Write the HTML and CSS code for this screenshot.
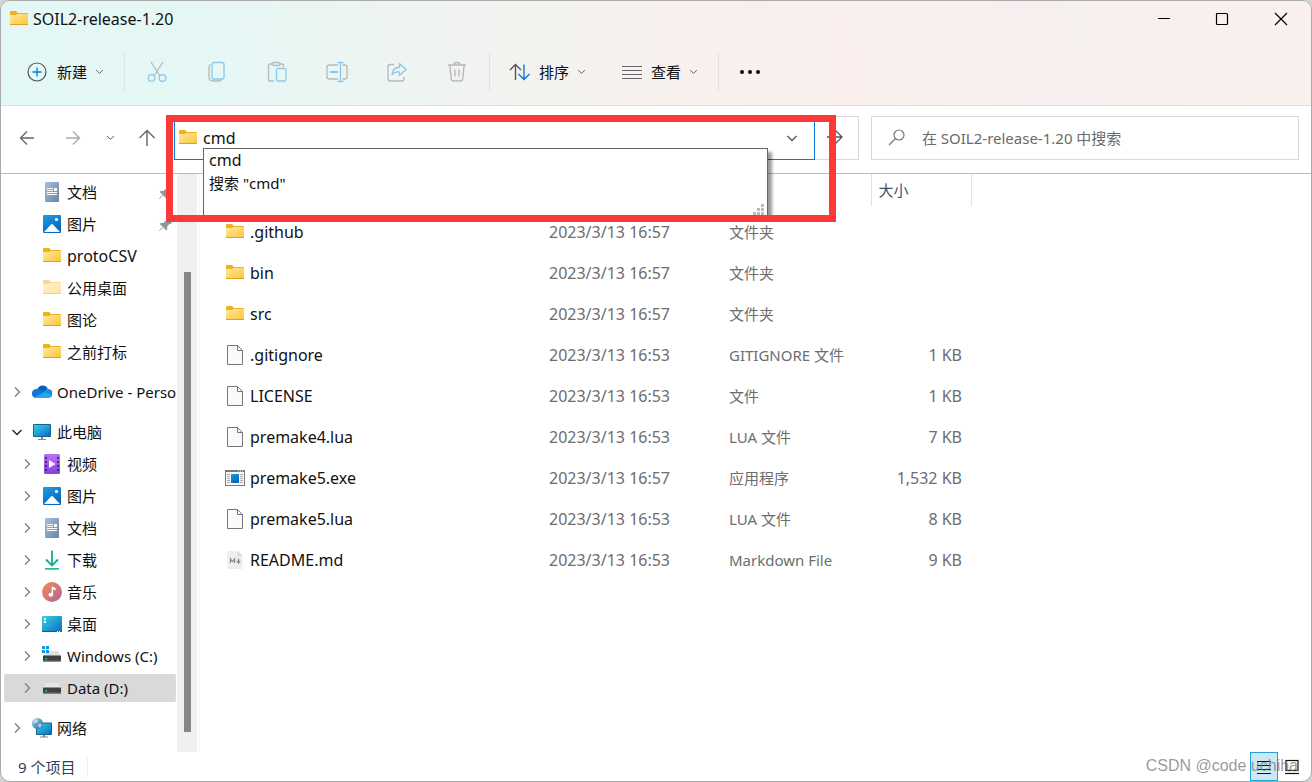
FILE: index.html
```html
<!DOCTYPE html>
<html lang="zh-CN">
<head>
<meta charset="utf-8">
<title>SOIL2-release-1.20</title>
<link rel="stylesheet" href="styles.css">
</head>
<body>
<svg class="sprite" aria-hidden="true">
  <defs>
    <linearGradient id="g-folder" x1="0" y1="0" x2="1" y2="1"><stop offset="0" stop-color="#ffe9a0"/><stop offset="1" stop-color="#fcc63a"/></linearGradient>
    <linearGradient id="g-doc" x1="0" y1="0" x2="1" y2="1"><stop offset="0" stop-color="#a9bfd6"/><stop offset="1" stop-color="#6585a5"/></linearGradient>
    <linearGradient id="g-pic" x1="0" y1="0" x2="0.5" y2="1"><stop offset="0" stop-color="#1c9ee8"/><stop offset="1" stop-color="#0a66bb"/></linearGradient>
    <linearGradient id="g-screen" x1="0" y1="0" x2="1" y2="1"><stop offset="0" stop-color="#35d3e4"/><stop offset="1" stop-color="#0b6cc4"/></linearGradient>
    <linearGradient id="g-video" x1="0" y1="0" x2="0" y2="1"><stop offset="0" stop-color="#b673f5"/><stop offset="1" stop-color="#8540dd"/></linearGradient>
    <linearGradient id="g-music" x1="0" y1="0" x2="1" y2="1"><stop offset="0" stop-color="#f09050"/><stop offset="1" stop-color="#b4609f"/></linearGradient>
    <linearGradient id="g-globe" x1="0" y1="0" x2="1" y2="1"><stop offset="0" stop-color="#8fc9e8"/><stop offset="1" stop-color="#2b6f9d"/></linearGradient>
  </defs>
  <symbol id="folder" viewBox="0 0 20 20">
    <path d="M1 3q0-1 1-1h5l2 2h9q1 0 1 1v3H1z" fill="#f4b01c"/>
    <path d="M1 6h6l2-1h10v10.500H1z" fill="url(#g-folder)"/>
    <path d="M1 15h18v1H1z" fill="#e2a024"/>
  </symbol>
  <symbol id="doc" viewBox="0 0 20 20">
    <rect x="3" width="14" height="20" rx="1" fill="url(#g-doc)"/>
    <path d="M5 6h6v1H5zM5 8h6v1H5zM5 10h10v1H5zM5 12h10v1H5zM12 6h3v3h-3z" fill="#fff"/>
  </symbol>
  <symbol id="pic" viewBox="0 0 20 20">
    <rect x="1" y="1" width="18" height="18" rx="1" fill="url(#g-pic)"/>
    <circle cx="14.500" cy="5.500" r="1.600" fill="#fff"/>
    <path d="M2 18l7-7.500q1-1 2 0l7 7.500z" fill="#f4faff"/>
  </symbol>
  <symbol id="cloud" viewBox="0 0 20 20">
    <path d="M5.500 7a5.600 5.600 0 0 1 10.300-.300L12 11 5 8z" fill="#0a62b8"/>
    <path d="M4 16A4.500 4.500 0 0 1 4.800 7q1.700-.1 3 .7l6 4z" fill="#0f78d4"/>
    <path d="M4.500 16L13 8.500q1.200-1.700 3.500-1.500a4.500 4.500 0 0 1-.5 9z" fill="#1490df"/>
    <path d="M2 15.300l11-5 6.500 3q-1.100 2.700-4 2.700H4.500q-1.500 0-2.500-.7z" fill="#28a8ea"/>
  </symbol>
  <symbol id="pc" viewBox="0 0 20 20">
    <path d="M6 17h8v1H6zM9 15h2v3H9z" fill="#7d878f"/>
    <rect x="1" y="2" width="18" height="13" rx="1" fill="#17618f"/>
    <rect x="2" y="3" width="16" height="11" fill="url(#g-screen)"/>
  </symbol>
  <symbol id="video" viewBox="0 0 20 20">
    <rect x="2" width="16" height="20" rx="1.500" fill="url(#g-video)"/>
    <path d="M4 3v15M16 3v15" stroke="#43206f" stroke-width="1.800" stroke-dasharray="2 2"/>
    <path d="M7 6l6.500 4L7 14z" fill="#fff"/>
  </symbol>
  <symbol id="down" viewBox="0 0 20 20">
    <path d="M10 .500v15M4 9.500l6 6 6-6" fill="none" stroke="#18aa91" stroke-width="1.800"/>
    <path d="M3 18h14v1.800H3z" fill="#2abf8d"/>
  </symbol>
  <symbol id="music" viewBox="0 0 20 20">
    <circle cx="10" cy="10" r="10" fill="url(#g-music)"/>
    <ellipse cx="8.800" cy="12.800" rx="2.300" ry="2" fill="#fff"/>
    <path d="M9.600 4.500q2 .2 4 1.500v2.200l-2.500-.7v5.300H9.600z" fill="#fff"/>
  </symbol>
  <symbol id="desktop" viewBox="0 0 20 20">
    <rect y="2" width="20" height="16" rx="1" fill="url(#g-screen)"/>
    <path d="M2 4h2v2H2zM2 7h2v2H2z" fill="#fff"/>
    <path d="M0 17h20v1H0z" fill="#0a5aa6"/><path d="M15 17h1v1h-1zM17 17h1v1h-1z" fill="#fff"/>
  </symbol>
  <symbol id="drive" viewBox="0 0 20 20">
    <path d="M4 5h12l3 5H1z" fill="#e4e7ea"/>
    <rect x="1" y="9.500" width="18" height="6" rx=".5" fill="#3e4144"/>
    <path d="M3.500 12h1.500v1.500H3.500z" fill="#42d75c"/><path d="M1 14.500h18v1H1z" fill="#717579"/>
  </symbol>
  <symbol id="windrive" viewBox="0 0 20 20">
    <path d="M5 5h11l3 5H1z" fill="#dcdfe3"/>
    <path d="M0 0h7v7H0z" fill="#fff"/>
    <path d="M0 0h3v3H0zM4 0h3v3H4zM0 4h3v3H0zM4 4h3v3H4z" fill="#1294df"/>
    <rect x="1" y="9.500" width="18" height="6" rx=".5" fill="#3e4144"/>
    <path d="M3.500 12h1.500v1.500H3.500z" fill="#42d75c"/><path d="M1 14.500h18v1H1z" fill="#717579"/>
  </symbol>
  <symbol id="network" viewBox="0 0 20 20">
    <path d="M8 18.500h8v1H8zM11 16h2v3h-2z" fill="#7d878f"/>
    <rect x="4" y="4.500" width="16" height="12.500" rx="1" fill="#17618f"/>
    <rect x="5" y="5.500" width="14" height="10.500" fill="url(#g-screen)"/>
    <circle cx="5.500" cy="5.500" r="5.500" fill="url(#g-globe)"/>
    <path d="M2 2q3-2 4 0T4 5 1 5zM6 6q3-1 4 1l-2 3q-2-1-2-4z" fill="#d5eaf4" opacity=".7"/>
  </symbol>
  <symbol id="file" viewBox="0 0 20 20">
    <path d="M2.500.5h10l5 5v14h-15z" fill="#fafafa" stroke="#777"/>
    <path d="M12.500.5v5h5" fill="none" stroke="#777"/>
  </symbol>
  <symbol id="exe" viewBox="0 0 20 20">
    <rect x=".5" y="2.500" width="19" height="15" fill="#f8f8f8" stroke="#777"/>
    <path d="M0 2h20v2H0z" fill="#777"/><path d="M13 3h1M15 3h1M17 3h1" stroke="#eee"/>
    <path d="M2 6.500h3M2 8.500h3M2 10.500h3M2 12.500h3M2 14.500h3M15 6.500h3M15 8.500h3M15 10.500h3M15 12.500h3M15 14.500h3" stroke="#aaa"/>
    <rect x="6" y="6" width="8" height="9" fill="url(#g-pic)"/>
  </symbol>
  <symbol id="md" viewBox="0 0 20 20">
    <path d="M3.500 1h9l5 5v12q0 1-1 1h-13q-1 0-1-1V2q0-1 1-1z" fill="#eee"/><path d="M12.500 1v5h5z" fill="#d8d8d8"/>
    <path d="M5.500 13V9l2 2.500 2-2.500v4M13.500 8.500v4M11.800 11l1.700 2 1.700-2" fill="none" stroke="#888" stroke-width="1.200"/>
  </symbol>
  <symbol id="pin" viewBox="0 0 12 12">
    <path d="M7.500 0L12 4.500l-1.500 1-1 0L7.500 8l0 2.500-1 1L4 8.500.500 12 0 11.500 3.500 8 .5 5.500l1-1H4L6.500 2.500V1z" fill="#8b979f"/>
  </symbol>
  <symbol id="chev-d" viewBox="0 0 12 12"><path d="M1.500 4L6 8.500 10.500 4" fill="none" stroke="currentColor" stroke-width="1.300"/></symbol>
  <symbol id="chev-r" viewBox="0 0 12 12"><path d="M4 1.500L8.500 6 4 10.500" fill="none" stroke="currentColor" stroke-width="1.400"/></symbol>
</svg>

<div class="window">
  <header class="top">
    <div class="titlebar">
      <svg class="ico"><use href="#folder"/></svg>
      <h1 class="title">SOIL2-release-1.20</h1>
      <div class="controls">
        <button aria-label="最小化"><svg class="ctl" viewBox="0 0 14 14"><path d="M1 6.500h12" stroke="#000"/></svg></button>
        <button aria-label="最大化"><svg class="ctl" viewBox="0 0 14 14"><rect x="1.500" y="1.500" width="11" height="11" rx="1" fill="none" stroke="#000" stroke-width="1.200"/></svg></button>
        <button aria-label="关闭"><svg class="ctl" viewBox="0 0 14 14"><path d="M1 1l12 12M13 1L1 13" stroke="#000" stroke-width="1.200"/></svg></button>
      </div>
    </div>
    <div class="toolbar">
      <div class="group">
        <button class="tool new">
          <svg class="ico" viewBox="0 0 20 20" fill="none"><circle cx="10" cy="10" r="9" stroke="#555" stroke-width="1.200"/><path d="M10 5.500v9M5.500 10h9" stroke="#0a78d4" stroke-width="1.300"/></svg>
          <span>新建</span><svg class="mini"><use href="#chev-d"/></svg>
        </button>
      </div>
      <div class="group icons">
        <button aria-label="剪切"><svg class="big" viewBox="0 0 24 24" fill="none" stroke-width="1.300"><path d="M6 2l9 14M18 2L9 16" stroke="#b4b9b9"/><circle cx="6.500" cy="18" r="3.300" stroke="#8cc8ee"/><circle cx="17.500" cy="18" r="3.300" stroke="#8cc8ee"/></svg></button>
        <button aria-label="复制"><svg class="big" viewBox="0 0 24 24" fill="none" stroke-width="1.300"><path d="M5.500 4.500q-1.500.5-1.500 2.500v10q0 4 4 4h6q2 0 2.500-1.500" stroke="#b4b9b9"/><rect x="7" y="2.500" width="12" height="16.500" rx="2" stroke="#8cc8ee"/></svg></button>
        <button aria-label="粘贴"><svg class="big" viewBox="0 0 24 24" fill="none" stroke-width="1.300"><path d="M9 21H5q-1.500 0-1.500-1.500v-14Q3.500 4 5 4h2.500M14.500 4H17q1.500 0 1.500 1.500v1.500" stroke="#b4b9b9"/><rect x="7.500" y="2.500" width="7.500" height="3" rx="1.500" stroke="#b4b9b9"/><rect x="11.500" y="8.500" width="9.500" height="12.500" rx="1.500" stroke="#8cc8ee"/></svg></button>
        <button aria-label="重命名"><svg class="big" viewBox="0 0 24 24" fill="none" stroke-width="1.300"><path d="M13 19H4.500Q2 19 2 17V7q0-2 2.500-2H13M17.500 5h2Q22 5 22 7v10q0 2-2.500 2h-2" stroke="#b4b9b9"/><path d="M12.500 2.500h6M12.500 21.500h6M15.500 2.500v19" stroke="#8cc8ee"/><path d="M5 12h8" stroke="#8cc8ee" stroke-width="2"/></svg></button>
        <button aria-label="共享"><svg class="big" viewBox="0 0 24 24" fill="none" stroke-width="1.300"><path d="M9 4.500H5.500q-2.500 0-2.500 2.500v11.500Q3 21 5.500 21h11q2.500 0 2.500-2.500V17" stroke="#b4b9b9"/><path d="M14.500 3.500l6.500 6-6.500 6v-3.500Q9 11.500 7 15q.5-7.500 7.500-8z" stroke="#8cc8ee" stroke-linejoin="round"/></svg></button>
        <button aria-label="删除"><svg class="big" viewBox="0 0 24 24" fill="none" stroke="#b9b9b7" stroke-width="1.400"><path d="M3 5h18M9 5q0-2.500 3-2.500T15 5M4.800 5l1.500 14q.2 2 2.200 2h7q2 0 2.200-2l1.500-14M10 9.500v7M14 9.500v7"/></svg></button>
      </div>
      <div class="group pair">
        <button class="tool">
          <svg class="wide" viewBox="0 0 22 20" fill="none" stroke-width="1.400"><path d="M6.500 18V2.500M1 8l5.500-5.500L12 8" stroke="#555"/><path d="M15 2.500v15M9.500 12l5.500 5.500 5.500-5.500" stroke="#0a78d4"/></svg>
          <span>排序</span><svg class="mini"><use href="#chev-d"/></svg>
        </button>
        <button class="tool">
          <svg class="wide" viewBox="0 0 22 20"><path d="M1 4.500h20M1 8.500h20M1 12.500h20M1 16.500h20" stroke="#666"/></svg>
          <span>查看</span><svg class="mini"><use href="#chev-d"/></svg>
        </button>
      </div>
      <div class="group more">
        <button aria-label="更多"><svg class="wide" viewBox="0 0 22 20"><circle cx="3" cy="10" r="2"/><circle cx="11" cy="10" r="2"/><circle cx="19" cy="10" r="2"/></svg></button>
      </div>
    </div>
  </header>

  <div class="navrow">
    <div class="arrows">
      <button aria-label="后退"><svg class="ico" viewBox="0 0 20 20" fill="none" stroke="#666" stroke-width="1.300"><path d="M17 10H3.500M10 3.500L3.500 10l6.500 6.500"/></svg></button>
      <button aria-label="前进"><svg class="ico" viewBox="0 0 20 20" fill="none" stroke="#aaa" stroke-width="1.300"><path d="M3 10h13.500M10 3.500l6.500 6.500-6.500 6.500"/></svg></button>
      <button class="slim" aria-label="最近位置"><svg class="mini"><use href="#chev-d"/></svg></button>
      <button aria-label="向上"><svg class="ico" viewBox="0 0 20 20" fill="none" stroke="#666" stroke-width="1.400"><path d="M10 18V2.500M2.500 10L10 2.500l7.500 7.500"/></svg></button>
    </div>
    <div class="address">
      <div class="combo">
        <svg class="ico"><use href="#folder"/></svg>
        <input class="latin" type="text" value="cmd" aria-label="地址">
        <button aria-label="展开"><svg class="small"><use href="#chev-d"/></svg></button>
      </div>
      <button class="go" aria-label="转到"><svg class="ico" viewBox="0 0 20 20" fill="none" stroke="#555" stroke-width="1.300"><path d="M1 9h15M9 2l7 7-7 7"/></svg></button>
      <div class="suggest">
        <ul><li class="latin">cmd</li><li>搜索 "cmd"</li></ul>
        <svg class="grip" viewBox="0 0 12 12"><path d="M8 0h3v3H8zM4 4h3v3H4zM8 4h3v3H8zM0 8h3v3H0zM4 8h3v3H4zM8 8h3v3H8z" fill="#bbb"/></svg>
      </div>
      <div class="highlight"></div>
    </div>
    <label class="search">
      <svg class="ico" viewBox="0 0 20 20" fill="none" stroke="#777" stroke-width="1.200"><circle cx="12" cy="7" r="5"/><path d="M8.500 10.500L2 17"/></svg>
      <input type="text" placeholder="在 SOIL2-release-1.20 中搜索" aria-label="搜索">
    </label>
  </div>

  <div class="body">
    <nav class="side">
      <ul class="tree">
        <li><a class="row sub" href="#"><svg class="ico"><use href="#doc"/></svg><span>文档</span><svg class="pin"><use href="#pin"/></svg></a></li>
        <li><a class="row sub" href="#"><svg class="ico"><use href="#pic"/></svg><span>图片</span><svg class="pin"><use href="#pin"/></svg></a></li>
        <li><a class="row sub" href="#"><svg class="ico"><use href="#folder"/></svg><span class="latin">protoCSV</span></a></li>
        <li><a class="row sub" href="#"><svg class="ico pale"><use href="#folder"/></svg><span>公用桌面</span></a></li>
        <li><a class="row sub" href="#"><svg class="ico"><use href="#folder"/></svg><span>图论</span></a></li>
        <li><a class="row sub" href="#"><svg class="ico"><use href="#folder"/></svg><span>之前打标</span></a></li>
        <li class="root"><a class="row" href="#"><svg class="tw"><use href="#chev-r"/></svg><svg class="ico"><use href="#cloud"/></svg><span>OneDrive - Personal</span></a></li>
        <li class="root"><a class="row" href="#"><svg class="tw open"><use href="#chev-d"/></svg><svg class="ico"><use href="#pc"/></svg><span>此电脑</span></a></li>
        <li><a class="row child" href="#"><svg class="tw"><use href="#chev-r"/></svg><svg class="ico"><use href="#video"/></svg><span>视频</span></a></li>
        <li><a class="row child" href="#"><svg class="tw"><use href="#chev-r"/></svg><svg class="ico"><use href="#pic"/></svg><span>图片</span></a></li>
        <li><a class="row child" href="#"><svg class="tw"><use href="#chev-r"/></svg><svg class="ico"><use href="#doc"/></svg><span>文档</span></a></li>
        <li><a class="row child" href="#"><svg class="tw"><use href="#chev-r"/></svg><svg class="ico"><use href="#down"/></svg><span>下载</span></a></li>
        <li><a class="row child" href="#"><svg class="tw"><use href="#chev-r"/></svg><svg class="ico"><use href="#music"/></svg><span>音乐</span></a></li>
        <li><a class="row child" href="#"><svg class="tw"><use href="#chev-r"/></svg><svg class="ico"><use href="#desktop"/></svg><span>桌面</span></a></li>
        <li><a class="row child" href="#"><svg class="tw"><use href="#chev-r"/></svg><svg class="ico"><use href="#windrive"/></svg><span>Windows (C:)</span></a></li>
        <li><a class="row child selected" href="#"><svg class="tw"><use href="#chev-r"/></svg><svg class="ico"><use href="#drive"/></svg><span>Data (D:)</span></a></li>
        <li class="root"><a class="row" href="#"><svg class="tw"><use href="#chev-r"/></svg><svg class="ico"><use href="#network"/></svg><span>网络</span></a></li>
      </ul>
      <div class="scroll"><div class="thumb"></div></div>
    </nav>
    <main class="files">
      <table>
        <colgroup><col class="c-name"><col class="c-date"><col class="c-type"><col class="c-size"><col></colgroup>
        <thead><tr><th aria-label="名称"></th><th aria-label="修改日期"></th><th aria-label="类型"></th><th class="line">大小</th><td class="line"></td></tr></thead>
        <tbody>
          <tr><td><div class="name latin"><svg class="ico"><use href="#folder"/></svg>.github</div></td><td class="latin">2023/3/13 16:57</td><td>文件夹</td><td class="size latin"></td><td></td></tr>
          <tr><td><div class="name latin"><svg class="ico"><use href="#folder"/></svg>bin</div></td><td class="latin">2023/3/13 16:57</td><td>文件夹</td><td class="size latin"></td><td></td></tr>
          <tr><td><div class="name latin"><svg class="ico"><use href="#folder"/></svg>src</div></td><td class="latin">2023/3/13 16:57</td><td>文件夹</td><td class="size latin"></td><td></td></tr>
          <tr><td><div class="name latin"><svg class="ico"><use href="#file"/></svg>.gitignore</div></td><td class="latin">2023/3/13 16:53</td><td>GITIGNORE 文件</td><td class="size latin">1 KB</td><td></td></tr>
          <tr><td><div class="name latin"><svg class="ico"><use href="#file"/></svg>LICENSE</div></td><td class="latin">2023/3/13 16:53</td><td>文件</td><td class="size latin">1 KB</td><td></td></tr>
          <tr><td><div class="name latin"><svg class="ico"><use href="#file"/></svg>premake4.lua</div></td><td class="latin">2023/3/13 16:53</td><td>LUA 文件</td><td class="size latin">7 KB</td><td></td></tr>
          <tr><td><div class="name latin"><svg class="ico"><use href="#exe"/></svg>premake5.exe</div></td><td class="latin">2023/3/13 16:57</td><td>应用程序</td><td class="size latin">1,532 KB</td><td></td></tr>
          <tr><td><div class="name latin"><svg class="ico"><use href="#file"/></svg>premake5.lua</div></td><td class="latin">2023/3/13 16:53</td><td>LUA 文件</td><td class="size latin">8 KB</td><td></td></tr>
          <tr><td><div class="name latin"><svg class="ico"><use href="#md"/></svg>README.md</div></td><td class="latin">2023/3/13 16:53</td><td>Markdown File</td><td class="size latin">9 KB</td><td></td></tr>
        </tbody>
      </table>
    </main>
  </div>

  <footer class="status">
    <span class="count">9 个项目</span>
    <div class="views">
      <button class="on" aria-label="详细信息"><svg class="view" viewBox="0 0 16 16"><path d="M1 2.500h14M1 6.500h14M1 10.500h14M1 14.500h14" stroke="#111" stroke-width="1.200"/></svg></button>
      <button aria-label="大缩略图"><svg class="view" viewBox="0 0 16 16" fill="none" stroke="#111" stroke-width="1.200"><rect x="2" y="1.500" width="12" height="10"/><path d="M1 14.500h14"/></svg></button>
    </div>
    <div class="watermark">CSDN @code uchiha</div>
  </footer>
</div>
</body>
</html>
```

FILE: styles.css
```css
* { box-sizing: border-box; }

body {
  margin: 0;
  background: #d4d4d4;
  color: #111;
  font: 15px/20px "Noto Sans", "Noto Sans CJK SC", sans-serif;
}

ul { list-style: none; margin: 0; padding: 0; }
a { color: inherit; text-decoration: none; }
svg { display: block; flex: none; }
button {
  border: 0;
  padding: 0;
  background: none;
  color: #555;
  font: inherit;
  display: flex;
  align-items: center;
  justify-content: center;
}
input {
  border: 0;
  outline: 0;
  padding: 0;
  background: none;
  color: inherit;
  font: inherit;
  min-width: 0;
  flex: 1;
}

.sprite { position: absolute; width: 0; height: 0; }
.ico { width: 20px; height: 20px; }
.big { width: 24px; height: 24px; }
.wide { width: 22px; height: 20px; }
.mini { width: 9px; height: 9px; }
.small { width: 12px; height: 12px; }
.ctl { width: 14px; height: 14px; }
.view { width: 16px; height: 16px; }
.latin { font-size: 16px; }

.window {
  display: flex;
  flex-direction: column;
  min-height: 100vh;
  border: 1px solid #aaa;
  border-radius: 10px;
  background: #fff;
  overflow: hidden;
}

/* Title bar and command bar */
.top {
  background: linear-gradient(80deg, #e3f8f6 0%, #e6f7f5 18%, #f2f3f0 38%, #f7f1ee 50%, #faefed 64%, #f7f0f0 82%, #faf0ee 100%);
  border-bottom: 1px solid #dcdedd;
}
.titlebar { display: flex; align-items: center; height: 35px; padding-left: 8px; }
.title { margin: 0 0 0 4px; font-size: 16px; font-weight: 400; }
.controls { display: flex; margin-left: auto; }
.controls button { width: 58px; height: 35px; }
.controls button:last-child { width: 60px; }
.toolbar { display: flex; align-items: center; height: 69px; padding-top: 2px; }
.group { display: flex; align-items: center; height: 40px; }
.group + .group { border-left: 1px solid #dfe3e1; }
.group:first-child { padding: 0 20px 0 26px; }
.tool { color: #111; gap: 8px; }
.tool .mini { color: #666; }
.new { gap: 10px; }
.new .mini { margin-left: -2px; }
.icons { padding: 0 2px; }
.icons button { width: 60px; }
.pair { gap: 35px; padding: 0 20px 0 19px; }
.more { padding: 0 20px; }
.more button { color: #111; }

/* Address row */
.navrow {
  display: grid;
  grid-template-columns: 161px minmax(0, 8fr) minmax(0, 5fr);
  column-gap: 12px;
  align-items: center;
  height: 68px;
  padding: 0 12px 4px 0;
  border-bottom: 1px solid #bcbcbc;
}
.arrows { display: flex; padding-left: 3px; }
.arrows button { width: 46px; height: 40px; flex: none; }
.arrows .slim { width: 28px; }
.address { position: relative; display: flex; height: 44px; }
.combo {
  display: flex;
  align-items: center;
  flex: 1;
  padding: 0 16px 0 3px;
  border: 1px solid #0a78d4;
}
.combo input { margin-left: 5px; }
.go { width: 44px; border: 1px solid #d9d9d9; border-left: 0; }
.suggest {
  position: absolute;
  left: 29px;
  right: 91px;
  top: 32px;
  height: 70px;
  border: 1px solid #666;
  background: #fff;
  box-shadow: 4px 4px 3px rgba(0, 0, 0, 0.4);
  clip-path: inset(0 -8px 0 0);
}
.suggest li { height: 23px; padding: 1px 5px 2px; }
.grip { position: absolute; right: 2px; bottom: 1px; width: 12px; height: 12px; }
.highlight {
  position: absolute;
  left: -8px;
  right: 23px;
  top: -1px;
  height: 107px;
  border: 7px solid #fc3838;
}
.search {
  display: flex;
  align-items: center;
  height: 44px;
  padding-left: 15px;
  border: 1px solid #d9d9d9;
}
.search input { margin-left: 15px; }
.search input::placeholder { color: #6a6a6a; opacity: 1; }

/* Folder tree */
.body { display: flex; flex: 1; }
.side { display: flex; flex: none; width: 199px; border-right: 1px solid #f3f3f3; }
.tree { width: 176px; padding: 4px 1px 4px 3px; }
.tree li { padding-bottom: 4px; }
.tree .root { padding-top: 8px; }
.row {
  display: flex;
  align-items: center;
  height: 28px;
  padding-left: 7px;
  border-radius: 2px;
  white-space: nowrap;
  overflow: hidden;
}
.row .ico { margin-right: 5px; }
.sub { padding: 0 4px 0 38px; }
.child { padding-left: 17px; }
.selected { background: #d9d9d9; }
.tw { width: 12px; height: 12px; margin-right: 9px; color: #808080; }
.open { color: #222; }
.pale { opacity: 0.5; }
.pin { width: 13px; height: 13px; margin-left: auto; }
.scroll { width: 20px; padding: 98px 6px 20px 7px; background: #efefef; }
.thumb { height: 100%; background: #868686; }

/* File list */
.files { flex: 1; min-width: 0; }
table { width: 100%; border-collapse: collapse; table-layout: fixed; }
.c-name { width: 341px; }
.c-date { width: 180px; }
.c-type { width: 150px; }
.c-size { width: 100px; }
th, td { padding: 0 8px; font-weight: 400; text-align: left; white-space: nowrap; }
thead tr { height: 32px; color: #43536d; }
thead .line { padding-left: 7px; border-left: 1px solid #e3e3e3; }
tbody::before { content: ""; display: block; height: 5px; }
tbody tr { height: 41px; color: #6d6d6d; }
tbody td:first-child { padding-left: 25px; }
.name { display: flex; align-items: center; gap: 5px; color: #111; }
tbody .size { padding-right: 9px; text-align: right; }

/* Status bar */
.status { position: relative; display: flex; align-items: center; height: 29px; padding: 0 5px 0 17px; }
.count { padding-right: 12px; border-right: 1px solid #eee; color: #2f405c; }
.views { display: flex; margin-left: auto; }
.views button { width: 28px; height: 29px; }
.views .on { border: 1px solid #26a0da; background: #cce8f6; }
.watermark {
  position: absolute;
  right: 13px;
  top: 4px;
  color: rgba(120, 120, 120, 0.75);
  font-family: "Liberation Sans", Arial, sans-serif;
  font-size: 16px;
}
```
